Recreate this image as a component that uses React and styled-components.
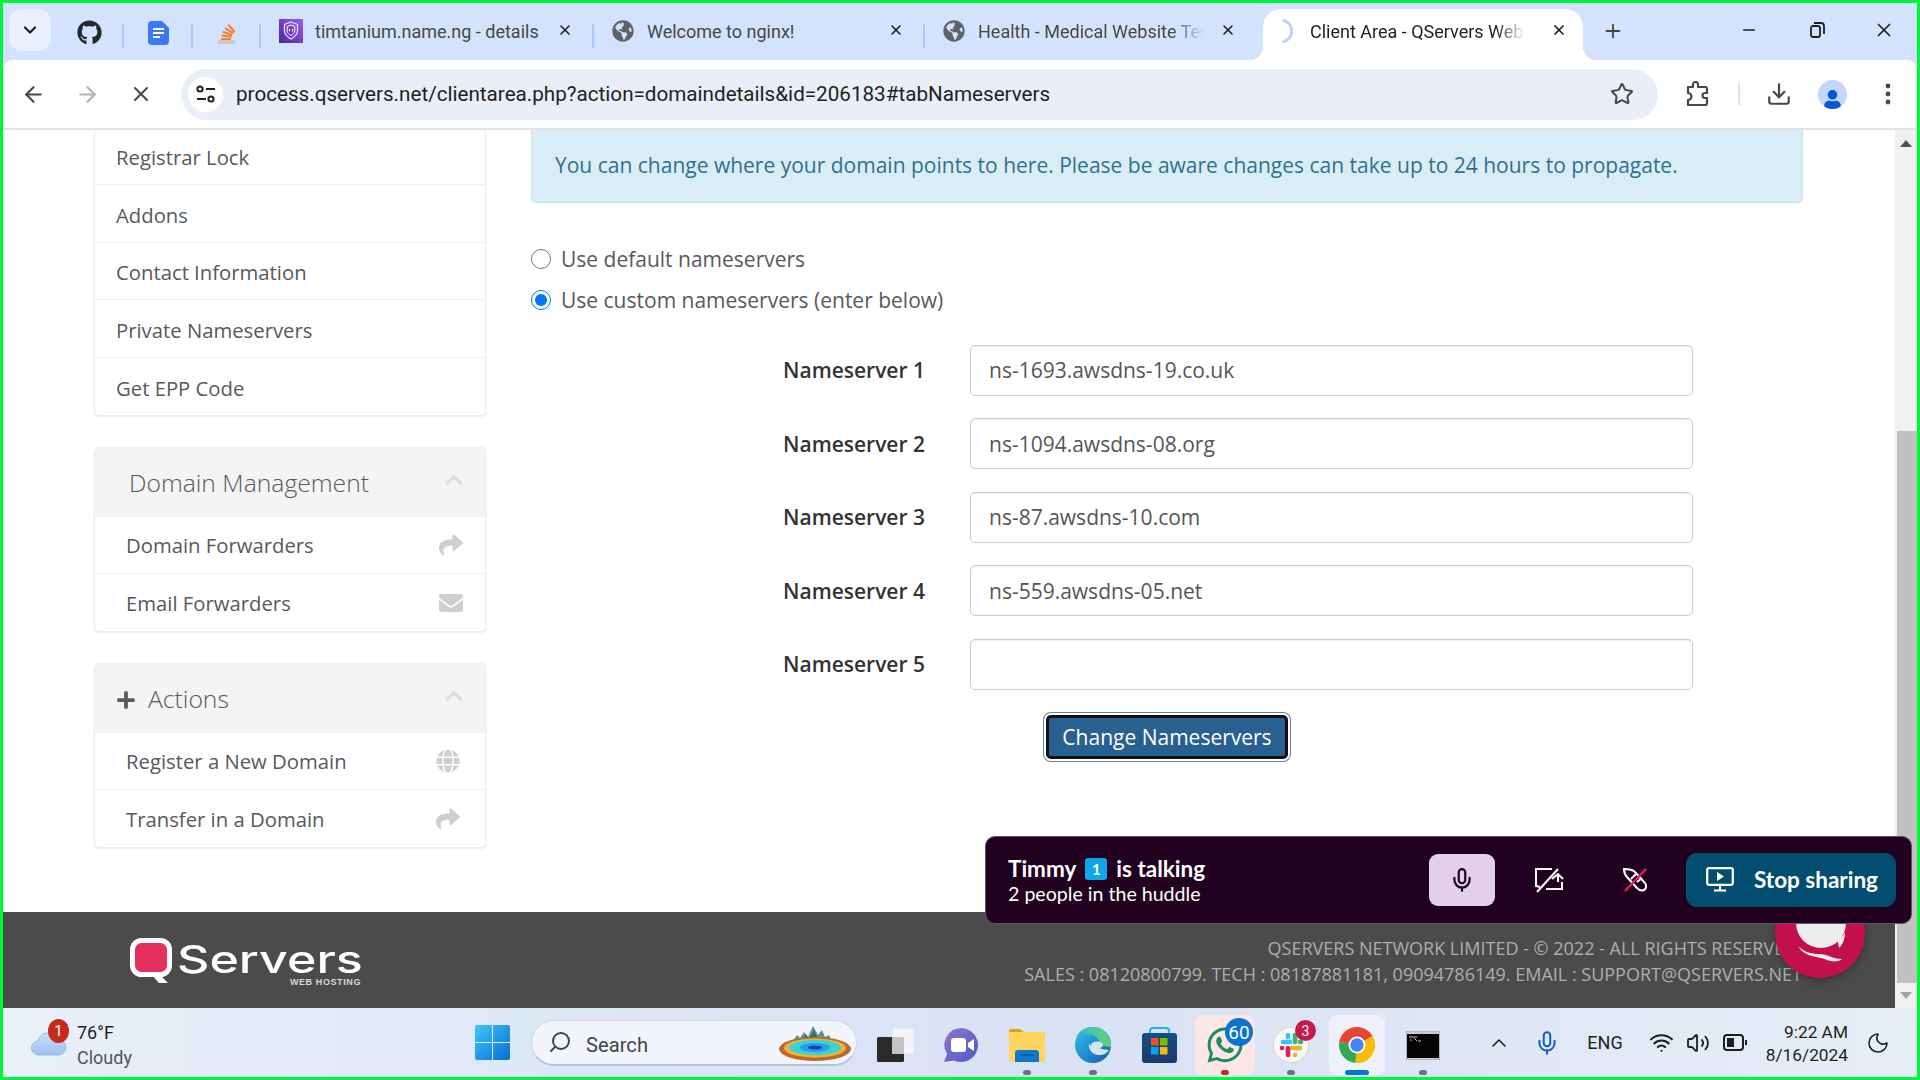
import React from 'react';
import styled, { createGlobalStyle } from 'styled-components';
import { ArrowLeft, ArrowRight, X, Star, Download, Plus, Minus, Mic, ChevronUp, ChevronDown, Wifi, Volume2, Moon, Search as SearchGlyph } from 'lucide-react';
import { FaGithub, FaGlobeAmericas, FaShare, FaEnvelope, FaGlobe, FaPlus, FaChevronUp, FaWhatsapp, FaUser } from 'react-icons/fa';

const Global = createGlobalStyle`
  html, body { margin: 0; padding: 0; width: 1920px; height: 1080px; overflow: hidden; background: #fff; }
  * { box-sizing: border-box; }
  #root { width: 1920px; height: 1080px; }
`;

const Frame = styled.div`
  width: 1920px; height: 1080px; border: 3px solid #00f53d; display: flex; flex-direction: column;
  overflow: hidden; background: #fff; font-family: "Open Sans", sans-serif;
`;

/* ---------- browser chrome ---------- */
const TabStrip = styled.div`
  height: 57px; flex: none; background: #d3e3fd; display: flex; align-items: flex-end;
  font-family: Roboto, sans-serif; font-size: 18px; color: #474747; padding-left: 6px; position: relative;
`;
const ChevronBtn = styled.div`
  width: 42px; height: 42px; border-radius: 13px; background: #e9f0fe; display: flex; align-items: center;
  justify-content: center; margin: 0 4px 9px 0; color: #1f1f1f; align-self: flex-end;
`;
const Pinned = styled.div`
  width: ${p => p.$w}px; height: 51px; display: flex; align-items: center; justify-content: center; position: relative; padding-bottom: 4px;
  &::after { content: ''; position: absolute; right: 0; top: 15px; height: 24px; width: 2px; background: #a8c7fa; }
`;
const Tab = styled.div`
  width: ${p => p.$w}px; height: 51px; display: flex; align-items: center; padding-left: 18px; position: relative; flex: none;
  padding-bottom: 7px;
  ${p => p.$sep && `&::after { content: ''; position: absolute; right: 0; top: 15px; height: 24px; width: 2px; background: #a8c7fa; }`}
  ${p => p.$active && `
    background: #fff; border-radius: 18px 18px 0 0; color: #1f1f1f;
    &::before { content: ''; position: absolute; left: -14px; bottom: 0; width: 14px; height: 14px;
      background: radial-gradient(circle at 0 0, transparent 14px, #fff 14.5px); }
    &::after { content: ''; position: absolute; right: -14px; bottom: 0; width: 14px; height: 14px;
      background: radial-gradient(circle at 100% 0, transparent 14px, #fff 14.5px); }
  `}
`;
const TabIcon = styled.span`
  width: ${p => p.$w || 24}px; height: 24px; display: flex; align-items: center; justify-content: center; flex: none; color: #5f6368;
`;
const TabTitle = styled.span`
  margin-left: ${p => p.$gap}px; width: ${p => p.$w}px; white-space: nowrap; overflow: hidden; flex: none;
  ${p => p.$fade && `-webkit-mask-image: linear-gradient(90deg, #000 86%, transparent 100%); mask-image: linear-gradient(90deg, #000 86%, transparent 100%);`}
`;
const TabClose = styled.span`
  position: absolute; right: ${p => p.$r}px; top: 13px; color: #1f1f1f; display: flex;
`;
const NewTab = styled.div`
  margin-left: 19px; height: 51px; display: flex; align-items: center; color: #474747; padding-bottom: 8px;
`;
const WindowControls = styled.div`
  margin-left: auto; height: 51px; display: flex; align-items: center; padding: 0 0 10px 0; color: #1f1f1f;
`;
const WinBtn = styled.span`
  width: ${p => p.$w}px; display: flex; justify-content: center;
`;

const BarStrip = styled.div`
  background: #d3e3fd; flex: none;
`;
const Toolbar = styled.div`
  height: 70px; flex: none; background: #fff; border-bottom: 2px solid #e3e3e3; display: flex; align-items: center;
  border-radius: 10px 10px 0 0; position: relative; color: #474747;
`;
const NavBtn = styled.span`
  width: ${p => p.$w}px; display: flex; justify-content: center; flex: none; color: ${p => p.$dim ? '#b0b0b0' : '#474747'};
`;
const Address = styled.div`
  width: 1477px; height: 51px; border-radius: 26px; background: #eaeef7; display: flex; align-items: center; padding-left: 7px; flex: none; margin-left: 10px;
`;
const SiteChip = styled.span`
  width: 35px; height: 35px; border-radius: 50%; background: #fff; display: flex; align-items: center; justify-content: center; flex: none;
`;
const Url = styled.span`
  font-family: Roboto, sans-serif; font-size: 20.65px; color: #1f1f1f; margin-left: 13px; white-space: nowrap;
`;
const StarBtn = styled.span`
  margin-left: auto; margin-right: 24px; display: flex; color: #474747;
`;
const BarSep = styled.span`
  width: 2px; height: 22px; background: #d3e3fd; flex: none;
`;
const Avatar = styled.span`
  width: 29px; height: 29px; border-radius: 50%; background: #c2d7fb; color: #0b57d0; display: flex; align-items: flex-end; justify-content: center; overflow: hidden; flex: none;
`;

/* ---------- page ---------- */
const Viewport = styled.div`
  flex: 1; min-height: 0; display: flex; position: relative;
`;
const PageColumn = styled.div`
  flex: 1; min-width: 0; display: flex; flex-direction: column;
`;
const Content = styled.div`
  flex: 1; min-height: 0; display: flex; padding-left: 91px; gap: 45px; overflow: hidden;
`;
const Sidebar = styled.aside`
  width: 392px; flex: none; display: flex; flex-direction: column; gap: 31px; margin-top: -2.5px;
`;
const Panel = styled.div`
  border: 1px solid #ececec; border-radius: 5px; box-shadow: 0 1px 2px rgba(0,0,0,.08); background: #fff; overflow: hidden;
  ${p => p.$cut && 'border-top: 0;'}
`;
const PanelHead = styled.div`
  height: 69px; background: #f4f4f4; display: flex; align-items: center; padding-left: ${p => p.$pad}px; padding-right: 21px;
  font-size: 24.7px; font-weight: 300; color: #58595b; position: relative;
`;
const HeadChevron = styled.span`
  margin-left: auto; color: #dedede; display: flex; margin-bottom: 6px;
`;
const HeadText = styled.span` margin-top: -1px; `;
const PlusMark = styled.span`
  display: flex; color: #58595b; margin-right: 12px; margin-top: 2px;
`;
const Row = styled.div`
  height: ${p => p.$h || 57.5}px; display: flex; align-items: center; padding-left: ${p => p.$pad}px; padding-right: ${p => p.$right || 22}px;
  font-size: 20.3px; color: #58595b; border-bottom: 1px solid #eeeeee;
  &:last-child { border-bottom: 0; }
`;
const RowLabel = styled.span` padding-top: ${p => p.$nudge || 0}px; `;
const RowIcon = styled.span`
  margin-left: auto; color: #cfcfcf; display: flex;
`;

const Main = styled.main`
  width: 1272px; flex: none; display: flex; flex-direction: column;
`;
const Alert = styled.div`
  height: 73px; background: #d9edf7; border: 1px solid #bce8f1; border-top: 0; border-radius: 0 0 5px 5px; color: #31708f;
  font-size: 21px; padding: 22px 0 0 23px; white-space: nowrap; line-height: 27px;
`;
const Radios = styled.div`
  margin-top: 35px; display: flex; flex-direction: column;
`;
const RadioRow = styled.label`
  height: 41px; display: flex; align-items: center; font-size: 21px; color: #58595b;
`;
const Radio = styled.input`
  width: 20px; height: 20px; margin: 0 10px 0 0; accent-color: #0075ff; flex: none;
`;
const Form = styled.div`
  margin-top: 24.5px; padding-left: 252px; display: flex; flex-direction: column; gap: 22.5px;
`;
const FormRow = styled.div`
  display: flex; align-items: center; height: 51px;
`;
const FieldLabel = styled.span`
  width: 187px; flex: none; font-size: 21px; font-weight: 600; color: #333;
`;
const Field = styled.input`
  width: 723px; height: 51px; border: 1px solid #ccc; border-radius: 5px; padding: 0 18px; font: 400 21px "Open Sans", sans-serif; color: #555;
  box-shadow: inset 0 1px 1px rgba(0,0,0,.075); background: #fff; outline: 0;
`;
const Actions = styled.div`
  margin-top: 25px; display: flex; justify-content: center;
`;
const SubmitBtn = styled.button`
  width: 242px; height: 44px; background: #286090; color: #fff; border: 3px solid #111; border-radius: 5px; font: 400 21px "Open Sans", sans-serif;
  box-shadow: 0 0 0 2px #fff, 0 0 0 3px #5d82a8; padding: 0;
`;

const Footer = styled.footer`
  height: 96px; flex: none; background: #4b4b4b; display: flex; align-items: flex-start; justify-content: space-between; padding: 0 93px 0 127px;
`;
const Logo = styled.div`
  display: flex; align-items: flex-start; margin-top: 26px; color: #fff;
`;
const LogoWords = styled.div`
  width: 187px; display: flex; flex-direction: column; align-items: flex-end; margin-left: 3px;
`;
const LogoName = styled.span`
  width: 187px; font: 500 38px/38px Inter, sans-serif; margin-top: 2px; height: 38px; transform: scaleX(1.32); transform-origin: left center;
`;
const LogoTag = styled.span`
  font: 700 9px/9px "Liberation Sans", sans-serif; color: #d8d8d8; letter-spacing: .6px; margin-right: 3px;
`;
const Legal = styled.div`
  margin-top: 23px; text-align: right; color: #aeaeae; font-size: 18px; line-height: 26px; white-space: nowrap;
`;

const Scrollbar = styled.div`
  width: 22px; flex: none; background: #f1f1f1; display: flex; flex-direction: column; align-items: flex-end;
`;
const ScrollArrow = styled.div`
  width: 22px; height: ${p => p.$h}px; display: flex; align-items: center; justify-content: center;
  &::before { content: ''; width: 0; height: 0; border-left: 6px solid transparent; border-right: 6px solid transparent;
    ${p => p.$down ? 'border-top: 7px solid #a3a3a3;' : 'border-bottom: 7px solid #505050;'} }
`;
const ScrollGap = styled.div` height: 274px; flex: none; `;
const Thumb = styled.div` width: 20px; height: 552px; background: #c1c1c1; flex: none; `;

const ChatBubble = styled.div`
  position: absolute; left: 1772px; top: 758px; width: 90px; height: 90px; border-radius: 50%; background: #c2104f; box-shadow: 0 2px 8px rgba(0,0,0,.35);
`;
const Huddle = styled.div`
  position: absolute; right: 5px; top: 706px; width: 927px; height: 88px; background: #22001f; border: 1px solid #5a5a5a; border-radius: 10px;
  display: flex; align-items: center; font-family: Lato, sans-serif; color: #fff; padding-left: 22px;
`;
const HuddleText = styled.div` display: flex; flex-direction: column; margin-top: 2px; `;
const HuddleTitle = styled.div` font-size: 22.5px; font-weight: 700; line-height: 26px; display: flex; align-items: center; `;
const KeyBadge = styled.span`
  width: 22px; height: 22px; background: #0ea5e9; border-radius: 3px; font-size: 15px; font-weight: 700; display: flex; align-items: center; justify-content: center; margin: 0 9px;
`;
const HuddleSub = styled.div` font-size: 19.6px; line-height: 24px; `;
const MicBtn = styled.div`
  width: 66px; height: 52px; border-radius: 9px; background: #e2cfe9; color: #22001f; display: flex; align-items: center; justify-content: center; margin: 0 11px 0 auto;
`;
const HuddleIcon = styled.div`
  width: 86px; display: flex; justify-content: center; flex: none;
`;
const StopBtn = styled.div`
  width: 210px; height: 54px; border-radius: 11px; background: #034d70; display: flex; align-items: center; padding-left: 20px; gap: 20px;
  font-size: 22.5px; font-weight: 700; margin: 0 15px 0 8px; flex: none; padding-bottom: 1px;
`;

/* ---------- taskbar ---------- */
const Taskbar = styled.div`
  height: 69px; flex: none; background: linear-gradient(90deg, #e9f0f8 0%, #dce7f6 30%, #d9e2f3 55%, #dde6f3 75%, #e6eef7 100%);
  display: flex; align-items: center; font-family: Roboto, sans-serif; color: #1f1f1f; position: relative;
`;
const Weather = styled.div`
  width: 472px; flex: none; display: flex; align-items: center; padding-left: 28px; position: relative; height: 100%;
`;
const AlertDot = styled.span`
  position: absolute; left: 45px; top: 11px; width: 21px; height: 24px; border-radius: 50%; background: #c42b1c; color: #fff; font-size: 15px; display: flex; align-items: center; justify-content: center;
`;
const WeatherText = styled.div`
  margin-left: 10px; font-size: 18px; line-height: 25px; display: flex; flex-direction: column; margin-top: 4px;
`;
const Muted = styled.span` color: #555; `;
const SearchBox = styled.div`
  width: 326px; height: 46px; margin-left: 21px; border-radius: 23px; background: #f2f5fc; border: 1px solid #cfd6e6; border-bottom: 2px solid #b9c2d6;
  display: flex; align-items: center; padding-left: 16px; font-size: 20.2px; color: #444; position: relative; flex: none;
`;
const SearchLabel = styled.span` margin: 6px 0 0 14px; `;
const SearchArt = styled.span` position: absolute; right: 4px; top: 5px; display: flex; `;
const Slots = styled.div` margin-left: 5px; display: flex; flex: none; height: 100%; `;
const Slot = styled.div`
  width: 66px; height: 100%; display: flex; justify-content: center; flex: none;
`;
const Tile = styled.div`
  width: ${p => p.$w || 60}px; height: 60px; margin-top: 7px; border-radius: 8px; position: relative; display: flex; align-items: center; justify-content: center;
  background: ${p => p.$bg || 'transparent'};
`;
const Count = styled.span`
  position: absolute; left: ${p => p.$l}px; top: ${p => p.$t}px; min-width: ${p => p.$s}px; height: ${p => p.$s}px; border-radius: ${p => p.$s / 2}px; background: ${p => p.$c};
  color: #fff; font-size: ${p => p.$f}px; display: flex; align-items: center; justify-content: center;
`;
const RunDot = styled.span`
  position: absolute; bottom: 0; left: 50%; transform: translateX(-50%); width: ${p => p.$w || 8}px; height: 5px; border-radius: 3px; background: ${p => p.$c || '#6d7280'};
`;
const Tray = styled.div` margin-left: 19px; display: flex; align-items: center; flex: none; height: 100%; `;
const TrayCell = styled.span`
  width: ${p => p.$w}px; display: flex; justify-content: center; flex: none; font-size: 18px;
`;
const Clock = styled.div`
  width: 91px; flex: none; text-align: right; font-size: 17.3px; line-height: 23px; margin-top: 3px;
`;

/* ---------- drawings ---------- */
const DocIcon = () => (
  <svg width="21" height="24" viewBox="0 0 21 24"><path d="M4 0h10l7 7v13a4 4 0 0 1-4 4H4a4 4 0 0 1-4-4V4a4 4 0 0 1 4-4z" fill="#3a78f6" /><path d="M5 8h11M5 12h11M5 16h7" stroke="#fff" strokeWidth="1.8" /></svg>
);
const StackIcon = () => (
  <svg width="20" height="24" viewBox="0 0 20 24"><path d="M1 19h17v4H1z" fill="#c9c9c9" /><g stroke="#f48024" strokeWidth="2"><path d="M4 18h10" /><path d="M4.6 14.6l10 1.2" /><path d="M5.8 10.8l9.4 3.4" /><path d="M8 7l8.2 5.4" /><path d="M11.2 3.6l6.4 7.4" /></g></svg>
);
const ShieldIcon = () => (
  <svg width="24" height="24" viewBox="0 0 24 24"><defs><linearGradient id="tm" x1="0" y1="1" x2="1" y2="0"><stop offset="0" stopColor="#4f249c" /><stop offset="1" stopColor="#9a5cf0" /></linearGradient></defs><rect width="24" height="24" fill="url(#tm)" /><path d="M12 3l6.5 2.4V12c0 3.4-3 6-6.5 8-3.5-2-6.5-4.6-6.5-8V5.4z" fill="none" stroke="#e8dcff" strokeWidth="1.3" /><path d="M12 6l3.8 1.4V12c0 1.8-1.8 3.4-3.8 4.6-2-1.2-3.8-2.8-3.8-4.6V7.4z" fill="none" stroke="#fff" strokeWidth="1" /><path d="M10.4 10v2.4M13.6 10v2.4" stroke="#fff" strokeWidth="1" /></svg>
);
const Spinner = () => (
  <svg width="18" height="26" viewBox="0 0 18 26"><path d="M3 2.5a11 11 0 0 1 0 21" fill="none" stroke="#bdd0f4" strokeWidth="3" strokeLinecap="round" /></svg>
);
const RestoreIcon = () => (
  <svg width="15" height="16" viewBox="0 0 15 16" fill="none" stroke="#1f1f1f" strokeWidth="1.8"><rect x="1" y="4" width="9" height="11" rx="2" /><path d="M4 1h7a3 3 0 0 1 3 3v8" /></svg>
);
const TuneIcon = () => (
  <svg width="20" height="18" viewBox="0 0 20 18" fill="none" stroke="#222" strokeWidth="2"><circle cx="4" cy="4" r="2.6" /><path d="M10 4h9" /><circle cx="15" cy="14" r="2.6" /><path d="M1 14h9" /></svg>
);
const ExtIcon = () => (
  <svg width="24" height="26" viewBox="-1 0 24 26" fill="none" stroke="#474747" strokeWidth="2.2" strokeLinejoin="round"><path d="M1 6h5V3.5a2.5 2.5 0 0 1 5 0V6h7a2 2 0 0 1 2 2v4h-2a2.5 2.5 0 0 0 0 5h2v5a2 2 0 0 1-2 2H1v-5a2.5 2.5 0 0 0 0-7z" /></svg>
);
const CloudIcon = () => (
  <svg width="36" height="26" viewBox="0 0 36 26"><defs><linearGradient id="cl" x1="0" y1="0" x2="0" y2="1"><stop offset="0" stopColor="#c8dcf8" /><stop offset="1" stopColor="#9fc2ee" /></linearGradient></defs><path d="M8 25a7 7 0 0 1-1-14 10 10 0 0 1 19-2 8 8 0 0 1 2 16z" fill="url(#cl)" stroke="#8fb5e5" strokeWidth=".8" /></svg>
);
const WinLogo = () => (
  <svg width="35" height="35" viewBox="0 0 35 35"><defs><linearGradient id="wn" x1="0" y1="0" x2="1" y2="1"><stop offset="0" stopColor="#3fc6fa" /><stop offset="1" stopColor="#0670d0" /></linearGradient></defs><path d="M0 2a2 2 0 0 1 2-2h15v17H0zM18 0h15a2 2 0 0 1 2 2v15H18zM0 18h17v17H2a2 2 0 0 1-2-2zM18 18h17v15a2 2 0 0 1-2 2H18z" fill="url(#wn)" /></svg>
);
const GeyserArt = () => (
  <svg width="74" height="36" viewBox="0 0 74 36">
    <path d="M14 16l5-7 3 3 4-6 4 5 5-11 5 9 4-5 3 7 4-2 4 8z" fill="#5f8f9f" />
    <path d="M24 15l4-7 3 5 5-9 4 10z" fill="#3f6f5f" />
    <ellipse cx="37" cy="23" rx="36" ry="12" fill="#b9692a" />
    <ellipse cx="37" cy="22" rx="31" ry="9.5" fill="#f0b03a" />
    <ellipse cx="37" cy="21.5" rx="26" ry="7.5" fill="#33d6d8" />
    <ellipse cx="37" cy="21.5" rx="15" ry="4.5" fill="#2e9bea" />
    <ellipse cx="37" cy="21.5" rx="7" ry="2" fill="#1442c9" />
  </svg>
);
const TaskView = () => (
  <svg width="37" height="34" viewBox="0 0 37 34"><rect x="15" y="0" width="22" height="26" rx="1.5" fill="#f4f5f8" stroke="#dfe2ea" /><rect x="0" y="9" width="27" height="25" rx="1.5" fill="#2a2a2a" /><rect x="15" y="9" width="12" height="17" fill="#c4c4c4" /></svg>
);
const MeetIcon = () => (
  <svg width="36" height="36" viewBox="0 0 36 36"><defs><linearGradient id="mt" x1="0" y1="0" x2="1" y2="1"><stop offset="0" stopColor="#8d78c8" /><stop offset="1" stopColor="#5158c8" /></linearGradient></defs><path d="M18 1a17 17 0 1 1-7 32.5L1 35l3-8A17 17 0 0 1 18 1z" fill="url(#mt)" /><rect x="8" y="11" width="15" height="14" rx="3" fill="#fff" /><path d="M25 16l6-4v12l-6-4z" fill="#fff" /></svg>
);
const FolderIcon = () => (
  <svg width="36" height="34" viewBox="0 0 36 34"><path d="M0 3a2 2 0 0 1 2-2h9l4 3h21v6H0z" fill="#dca40c" /><rect y="4" width="36" height="30" rx="1" fill="#fdd55f" /><path d="M6 34V25a3 3 0 0 1 3-3h18a3 3 0 0 1 3 3v9z" fill="#0f78c8" /><path d="M11 27h14" stroke="#0a5a9c" strokeWidth="1.5" /></svg>
);
const EdgeIcon = () => (
  <svg width="36" height="36" viewBox="0 0 36 36"><defs><linearGradient id="eg" x1="0" y1="0" x2="1" y2="1"><stop offset="0" stopColor="#35c1f1" /><stop offset="1" stopColor="#0a5fb0" /></linearGradient><linearGradient id="eg2" x1="0" y1="0" x2="1" y2="0"><stop offset="0" stopColor="#2bb8e0" /><stop offset="1" stopColor="#66d66a" /></linearGradient></defs><circle cx="18" cy="18" r="18" fill="url(#eg)" /><path d="M36 20C36 8 27 0 17 0 9 0 3 5 1 11c4-4 12-5 18-2 4 2 6 5 5 9z" fill="url(#eg2)" /><path d="M24 21c-4 0-9-1-10-5-1 6 3 12 10 12 5 0 8-2 10-5-3 0-7-1-10-2z" fill="#d9e2f3" /><ellipse cx="22" cy="18" rx="6" ry="3.5" fill="#d9e2f3" /></svg>
);
const StoreIcon = () => (
  <svg width="35" height="36" viewBox="0 0 35 36"><defs><linearGradient id="st" x1="0" y1="0" x2="0" y2="1"><stop offset="0" stopColor="#114f88" /><stop offset="1" stopColor="#1c3a6e" /></linearGradient></defs><path d="M8 8V4a3 3 0 0 1 3-3h13a3 3 0 0 1 3 3v4" fill="none" stroke="#28b0e8" strokeWidth="2" /><rect y="6" width="35" height="30" rx="3" fill="url(#st)" /><rect x="9" y="11" width="7.5" height="7.5" fill="#f25022" /><rect x="18" y="11" width="7.5" height="7.5" fill="#7fba00" /><rect x="9" y="20" width="7.5" height="7.5" fill="#00a4ef" /><rect x="18" y="20" width="7.5" height="7.5" fill="#ffb900" /></svg>
);
const SlackIcon = () => (
  <svg width="36" height="36" viewBox="0 0 36 36"><circle cx="18" cy="18" r="17.5" fill="#f8f8f8" stroke="#d6d6d6" /><g strokeWidth="4.6" strokeLinecap="round"><path d="M10 15h7" stroke="#36c5f0" /><path d="M15 8v2" stroke="#36c5f0" /><path d="M22 8v7" stroke="#2eb67d" /><path d="M27 15h1" stroke="#2eb67d" /><path d="M19 21h8" stroke="#ecb22e" /><path d="M22 28h0" stroke="#ecb22e" /><path d="M15 21v7" stroke="#e01e5a" /><path d="M9 21h0" stroke="#e01e5a" /></g></svg>
);
const sector = (a, b, c) => {
  const pt = d => [17 + 17 * Math.cos(d * Math.PI / 180), 17 + 17 * Math.sin(d * Math.PI / 180)].map(v => v.toFixed(2)).join(' ');
  return <path d={`M17 17L${pt(a)}A17 17 0 ${b - a > 180 ? 1 : 0} 1 ${pt(b)}z`} fill={c} />;
};
const ChromeIcon = () => (
  <svg width="36" height="36" viewBox="0 0 34 34">
    {sector(-170, -30, '#ea4335')}{sector(-30, 95, '#fbbc04')}{sector(95, 190, '#34a853')}
    <circle cx="17" cy="17" r="8" fill="#fff" /><circle cx="17" cy="17" r="6.3" fill="#4285f4" />
  </svg>
);
const TerminalIcon = () => (
  <svg width="34" height="29" viewBox="0 0 34 29"><rect width="34" height="29" fill="#c9ced6" stroke="#9aa0aa" /><rect x="1" y="3" width="32" height="24" fill="#050505" /><path d="M3 6h8M4 9h2M8 7l3 3M12 10h3" stroke="#ddd" strokeWidth=".9" /></svg>
);
const ScreenOff = () => (
  <svg width="30" height="26" viewBox="0 0 30 26" fill="none" stroke="#fff" strokeWidth="2"><path d="M18 2H2v17l4 1M24 2L3 25M28 15v7H12M18 12l6-5 5 5M24 8v7" /></svg>
);
const RocketOff = () => (
  <svg width="26" height="26" viewBox="0 0 26 26"><g fill="none" stroke="#fff" strokeWidth="2"><path d="M2 2c6 0 9 1 11 3l10 11c2 3 1 6-1 7s-5 0-7-2L5 10C3 8 2 6 2 2z" /><path d="M9 12l5-5" /><path d="M15 15l5-4" /></g><path d="M24 2L3 24" stroke="#e01e5a" strokeWidth="2.4" /></svg>
);
const ScreenPlay = () => (
  <svg width="28" height="25" viewBox="0 0 28 25" fill="none" stroke="#fff" strokeWidth="2.2"><rect x="1.2" y="1.2" width="25.6" height="16.6" rx="2" /><path d="M14 18v5M8 23.5h12" /><path d="M11 5l7 4.5-7 4.5z" fill="#fff" stroke="none" /></svg>
);
const ChatMark = () => (
  <svg width="90" height="90" viewBox="0 0 90 90" fill="#ececec"><circle cx="46" cy="35" r="25" /><path d="M23 58C30 70 44 68 52 72c5 2 12 2 15-1-9 0-15-5-23-5-8 0-15-2-21-8z" /><path d="M62 50c4 0 6-2 8-6 0 7-2 12-6 16z" /></svg>
);
const QMark = () => (
  <svg width="44" height="46" viewBox="0 0 44 46"><rect x="2.5" y="2.5" width="37" height="34" rx="9" fill="#e5305f" stroke="#fff" strokeWidth="5" /><path d="M22 37h8l8 8h-9z" fill="#fff" /></svg>
);

const ForwardIcon = () => <FaShare size={24} />;

const fields = ['ns-1693.awsdns-19.co.uk', 'ns-1094.awsdns-08.org', 'ns-87.awsdns-10.com', 'ns-559.awsdns-05.net', ''];

export default function App() {
  return (
    <>
      <Global />
      <Frame>
        <TabStrip>
          <ChevronBtn><ChevronDown size={20} strokeWidth={2.6} /></ChevronBtn>
          <Pinned $w={69}><FaGithub size={25} color="#24292f" /></Pinned>
          <Pinned $w={69}><DocIcon /></Pinned>
          <Pinned $w={68}><StackIcon /></Pinned>
          <Tab $w={333} $sep><TabIcon><ShieldIcon /></TabIcon><TabTitle $gap={12} $w={232}>timtanium.name.ng - details</TabTitle><TabClose $r={21}><X size={16} strokeWidth={2.4} /></TabClose></Tab>
          <Tab $w={331} $sep><TabIcon $w={22}><FaGlobeAmericas size={22} /></TabIcon><TabTitle $gap={13} $w={230}>Welcome to nginx!</TabTitle><TabClose $r={21}><X size={16} strokeWidth={2.4} /></TabClose></Tab>
          <Tab $w={338}><TabIcon $w={22}><FaGlobeAmericas size={22} /></TabIcon><TabTitle $gap={13} $w={226} $fade>Health - Medical Website Template</TabTitle><TabClose $r={27}><X size={16} strokeWidth={2.4} /></TabClose></Tab>
          <Tab $w={320} $active><TabIcon $w={18}><Spinner /></TabIcon><TabTitle $gap={11} $w={215} $fade>Client Area - QServers Web Hosting</TabTitle><TabClose $r={16}><X size={16} strokeWidth={2.6} /></TabClose></Tab>
          <NewTab><Plus size={22} /></NewTab>
          <WindowControls>
            <WinBtn $w={68}><Minus size={18} strokeWidth={2.2} /></WinBtn>
            <WinBtn $w={68}><RestoreIcon /></WinBtn>
            <WinBtn $w={66}><X size={22} strokeWidth={1.8} /></WinBtn>
          </WindowControls>
        </TabStrip>
        <BarStrip>
          <Toolbar>
            <NavBtn $w={60}><ArrowLeft size={25} /></NavBtn>
            <NavBtn $w={48} $dim><ArrowRight size={25} /></NavBtn>
            <NavBtn $w={60}><X size={24} /></NavBtn>
            <Address>
              <SiteChip><TuneIcon /></SiteChip>
              <Url>process.qservers.net/clientarea.php?action=domaindetails&amp;id=206183#tabNameservers</Url>
              <StarBtn><Star size={24} strokeWidth={2} /></StarBtn>
            </Address>
            <NavBtn $w={80}><ExtIcon /></NavBtn>
            <BarSep />
            <NavBtn $w={78}><Download size={26} /></NavBtn>
            <Avatar><FaUser size={19} /></Avatar>
            <NavBtn $w={81}><svg width="6" height="24" viewBox="0 0 6 24" fill="#474747"><circle cx="3" cy="4" r="2.4" /><circle cx="3" cy="12" r="2.4" /><circle cx="3" cy="20" r="2.4" /></svg></NavBtn>
          </Toolbar>
        </BarStrip>

        <Viewport>
          <PageColumn>
            <Content>
              <Sidebar>
                <Panel $cut>
                  {['Registrar Lock', 'Addons', 'Contact Information', 'Private Nameservers', 'Get EPP Code'].map(t => <Row key={t} $pad={21}><RowLabel $nudge={3}>{t}</RowLabel></Row>)}
                </Panel>
                <Panel>
                  <PanelHead $pad={34}><HeadText>Domain Management</HeadText><HeadChevron><FaChevronUp size={20} /></HeadChevron></PanelHead>
                  <Row $pad={31} $h={57}>Domain Forwarders<RowIcon><ForwardIcon /></RowIcon></Row>
                  <Row $pad={31} $h={57}><RowLabel $nudge={1}>Email Forwarders</RowLabel><RowIcon><FaEnvelope size={24} /></RowIcon></Row>
                </Panel>
                <Panel>
                  <PanelHead $pad={21}><PlusMark><FaPlus size={20} /></PlusMark><HeadText>Actions</HeadText><HeadChevron><FaChevronUp size={20} /></HeadChevron></PanelHead>
                  <Row $pad={31} $right={25} $h={57}>Register a New Domain<RowIcon><FaGlobe size={24} /></RowIcon></Row>
                  <Row $pad={31} $right={25} $h={57}>Transfer in a Domain<RowIcon><ForwardIcon /></RowIcon></Row>
                </Panel>
              </Sidebar>
              <Main>
                <Alert>You can change where your domain points to here. Please be aware changes can take up to 24 hours to propagate.</Alert>
                <Radios>
                  <RadioRow><Radio type="radio" name="ns" />Use default nameservers</RadioRow>
                  <RadioRow><Radio type="radio" name="ns" defaultChecked />Use custom nameservers (enter below)</RadioRow>
                </Radios>
                <Form>
                  {fields.map((v, i) => (
                    <FormRow key={i}>
                      <FieldLabel>Nameserver {i + 1}</FieldLabel>
                      <Field defaultValue={v} />
                    </FormRow>
                  ))}
                </Form>
                <Actions><SubmitBtn>Change Nameservers</SubmitBtn></Actions>
              </Main>
            </Content>
            <Footer>
              <Logo>
                <QMark />
                <LogoWords>
                  <LogoName>Servers</LogoName>
                  <LogoTag>WEB HOSTING</LogoTag>
                </LogoWords>
              </Logo>
              <Legal>
                <div>QSERVERS NETWORK LIMITED - © 2022 - ALL RIGHTS RESERVED.</div>
                <div>SALES : 08120800799. TECH : 08187881181, 09094786149. EMAIL : SUPPORT@QSERVERS.NET</div>
              </Legal>
            </Footer>
          </PageColumn>
          <Scrollbar>
            <ScrollArrow $h={27} />
            <ScrollGap />
            <Thumb />
            <ScrollArrow $h={25} $down />
          </Scrollbar>
          <ChatBubble><ChatMark /></ChatBubble>
          <Huddle>
            <HuddleText>
              <HuddleTitle>Timmy<KeyBadge>1</KeyBadge>is talking</HuddleTitle>
              <HuddleSub>2 people in the huddle</HuddleSub>
            </HuddleText>
            <MicBtn><Mic size={26} /></MicBtn>
            <HuddleIcon><ScreenOff /></HuddleIcon>
            <HuddleIcon><RocketOff /></HuddleIcon>
            <StopBtn><ScreenPlay />Stop sharing</StopBtn>
          </Huddle>
        </Viewport>

        <Taskbar>
          <Weather>
            <CloudIcon />
            <AlertDot>1</AlertDot>
            <WeatherText><span>76°F</span><Muted>Cloudy</Muted></WeatherText>
          </Weather>
          <WinLogo />
          <SearchBox>
            <SearchGlyph size={24} style={{ transform: 'scaleX(-1)' }} />
            <SearchLabel>Search</SearchLabel>
            <SearchArt><GeyserArt /></SearchArt>
          </SearchBox>
          <Slots>
            <Slot><Tile><TaskView /></Tile></Slot>
            <Slot><Tile><MeetIcon /></Tile></Slot>
            <Slot><Tile><FolderIcon /><RunDot /></Tile></Slot>
            <Slot><Tile><EdgeIcon /><RunDot /></Tile></Slot>
            <Slot><Tile><StoreIcon /></Tile></Slot>
            <Slot><Tile $bg="#fde6e6"><FaWhatsapp size={40} color="#1f8a5e" /><Count $l={30} $t={3} $s={28} $c="#0a74d1" $f={19}>60</Count><RunDot $c="#c42b1c" /></Tile></Slot>
            <Slot><Tile><SlackIcon /><Count $l={34} $t={5} $s={21} $c="#c9184f" $f={14}>3</Count><RunDot /></Tile></Slot>
            <Slot><Tile $w={56} $bg="#eef1f9"><ChromeIcon /><RunDot $w={24} $c="#0a74d1" /></Tile></Slot>
            <Slot><Tile><TerminalIcon /><RunDot /></Tile></Slot>
          </Slots>
          <Tray>
            <TrayCell $w={48}><ChevronUp size={24} strokeWidth={1.6} /></TrayCell>
            <TrayCell $w={48}><Mic size={26} color="#0a5bc4" strokeWidth={1.8} /></TrayCell>
            <TrayCell $w={68}>ENG</TrayCell>
            <TrayCell $w={45}><Wifi size={25} strokeWidth={2} /></TrayCell>
            <TrayCell $w={28}><Volume2 size={24} strokeWidth={1.8} /></TrayCell>
            <TrayCell $w={45}><svg width="24" height="17" viewBox="0 0 24 17" fill="none" stroke="#1f1f1f" strokeWidth="2"><rect x="1" y="1" width="19" height="15" rx="3" /><rect x="4" y="4" width="7" height="9" fill="#1f1f1f" stroke="none" /><path d="M23 6v5" /></svg></TrayCell>
            <Clock><div>9:22 AM</div><div>8/16/2024</div></Clock>
            <TrayCell $w={60}><Moon size={24} strokeWidth={1.6} /></TrayCell>
          </Tray>
        </Taskbar>
      </Frame>
    </>
  );
}
